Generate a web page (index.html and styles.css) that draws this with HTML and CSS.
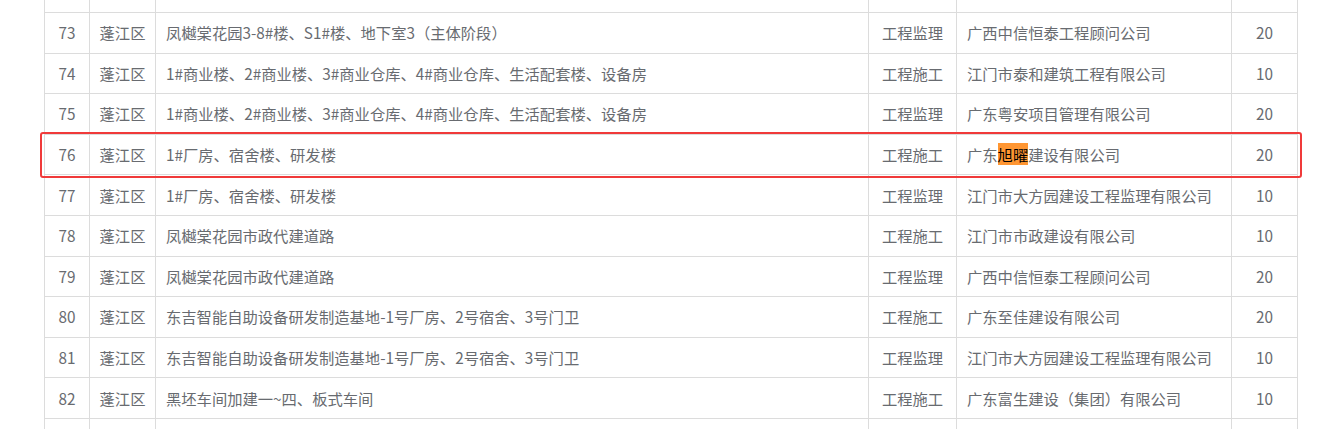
FILE: index.html
```html
<!DOCTYPE html>
<html lang="zh-CN">
<head>
<meta charset="utf-8">
<title>项目列表</title>
<link rel="stylesheet" href="styles.css">
</head>
<body>
<div class="wrap">
  <table class="grid">
    <colgroup>
      <col class="c-no"><col class="c-area"><col class="c-proj"><col class="c-type"><col class="c-corp"><col class="c-score">
    </colgroup>
    <tbody>
      <tr class="partial"><td class="ctr">72</td><td class="ctr">蓬江区</td><td>凤樾棠花园3-8#楼、S1#楼、地下室3（主体阶段）</td><td class="ctr">工程施工</td><td>江门市泰和建筑工程有限公司</td><td class="ctr">10</td></tr>
      <tr><td class="ctr">73</td><td class="ctr">蓬江区</td><td>凤樾棠花园3-8#楼、S1#楼、地下室3（主体阶段）</td><td class="ctr">工程监理</td><td>广西中信恒泰工程顾问公司</td><td class="ctr">20</td></tr>
      <tr><td class="ctr">74</td><td class="ctr">蓬江区</td><td>1#商业楼、2#商业楼、3#商业仓库、4#商业仓库、生活配套楼、设备房</td><td class="ctr">工程施工</td><td>江门市泰和建筑工程有限公司</td><td class="ctr">10</td></tr>
      <tr><td class="ctr">75</td><td class="ctr">蓬江区</td><td>1#商业楼、2#商业楼、3#商业仓库、4#商业仓库、生活配套楼、设备房</td><td class="ctr">工程监理</td><td>广东粤安项目管理有限公司</td><td class="ctr">20</td></tr>
      <tr><td class="ctr">76</td><td class="ctr">蓬江区</td><td>1#厂房、宿舍楼、研发楼</td><td class="ctr">工程施工</td><td>广东<mark class="hl">旭曜</mark>建设有限公司</td><td class="ctr">20</td></tr>
      <tr><td class="ctr">77</td><td class="ctr">蓬江区</td><td>1#厂房、宿舍楼、研发楼</td><td class="ctr">工程监理</td><td>江门市大方园建设工程监理有限公司</td><td class="ctr">10</td></tr>
      <tr><td class="ctr">78</td><td class="ctr">蓬江区</td><td>凤樾棠花园市政代建道路</td><td class="ctr">工程施工</td><td>江门市市政建设有限公司</td><td class="ctr">10</td></tr>
      <tr><td class="ctr">79</td><td class="ctr">蓬江区</td><td>凤樾棠花园市政代建道路</td><td class="ctr">工程监理</td><td>广西中信恒泰工程顾问公司</td><td class="ctr">20</td></tr>
      <tr><td class="ctr">80</td><td class="ctr">蓬江区</td><td>东吉智能自助设备研发制造基地-1号厂房、2号宿舍、3号门卫</td><td class="ctr">工程施工</td><td>广东至佳建设有限公司</td><td class="ctr">20</td></tr>
      <tr><td class="ctr">81</td><td class="ctr">蓬江区</td><td>东吉智能自助设备研发制造基地-1号厂房、2号宿舍、3号门卫</td><td class="ctr">工程监理</td><td>江门市大方园建设工程监理有限公司</td><td class="ctr">10</td></tr>
      <tr><td class="ctr">82</td><td class="ctr">蓬江区</td><td>黑坯车间加建一~四、板式车间</td><td class="ctr">工程施工</td><td>广东富生建设（集团）有限公司</td><td class="ctr">10</td></tr>
      <tr><td class="ctr">83</td><td class="ctr">蓬江区</td><td>黑坯车间加建一~四、板式车间</td><td class="ctr">工程监理</td><td>江门市大方园建设工程监理有限公司</td><td class="ctr">10</td></tr>
    </tbody>
  </table>
  <div class="focus-box"></div>
</div>
</body>
</html>
```

FILE: styles.css
```css
html, body {
  margin: 0;
  padding: 0;
  background: #ffffff;
  overflow: hidden;
}

body {
  font-family: "Microsoft YaHei", "Noto Sans CJK SC", "Noto Sans", sans-serif;
  font-size: 15.3px;
  color: #686b70;
}

.wrap {
  position: relative;
  padding-left: 44px;
  margin-top: -27.6px;
}

.grid {
  border-collapse: separate;
  border-spacing: 0;
  table-layout: fixed;
  width: 1254px;
  border-left: 1px solid #dcdcdc;
}

.c-no { width: 45px; }
.c-area { width: 66px; }
.c-proj { width: 713px; }
.c-type { width: 88px; }
.c-corp { width: 275px; }
.c-score { width: 66px; }

.grid td {
  padding: 9.3px 10px;
  line-height: 21px;
  border-right: 1px solid #dcdcdc;
  border-bottom: 1px solid #dcdcdc;
  white-space: nowrap;
  overflow: hidden;
  vertical-align: middle;
}

.grid .partial td {
  padding-top: 6.6px;
  padding-bottom: 12px;
}

.grid td.ctr {
  text-align: center;
  padding-left: 2px;
  padding-right: 2px;
}

.hl {
  background: #ff9632;
  color: #000000;
  padding: 0;
}

.focus-box {
  position: absolute;
  left: 40px;
  top: 159.3px;
  width: 1258px;
  height: 42.5px;
  border: 2px solid #f03a3a;
  border-radius: 3px;
  pointer-events: none;
}
```
